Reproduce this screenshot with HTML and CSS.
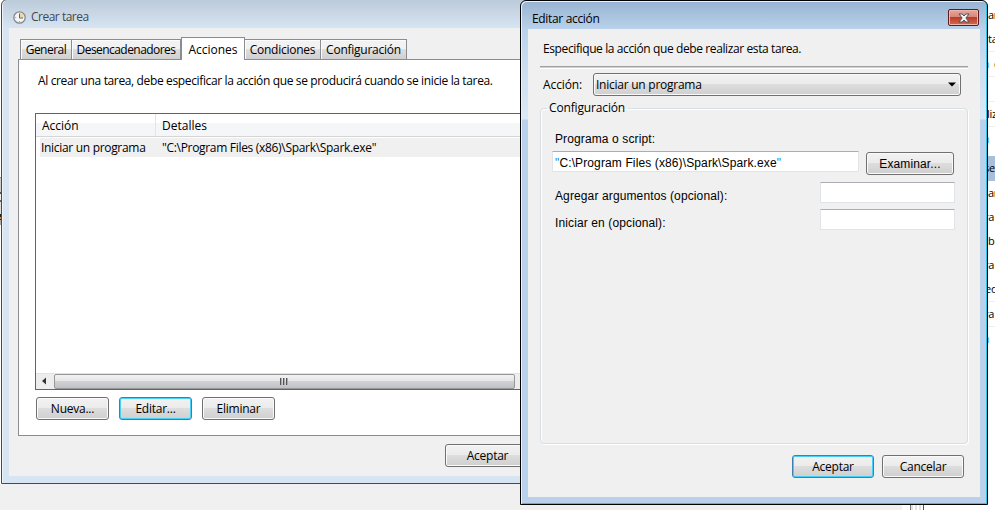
FILE: index.html
```html
<!DOCTYPE html>
<html lang="es">
<head>
<meta charset="utf-8">
<title>Crear tarea</title>
<link rel="stylesheet" href="styles.css">
</head>
<body>
<div class="desktop">
  <div class="back-left"></div>
  <div class="back-edge"></div>
  <div class="back-bar"><span class="bar-a"></span><span class="bar-b"></span></div>
  <ul class="back-list">
    <li>ar</li><li class="sep">ta</li><li class="sep nc"><span class="link">n</span> c</li><li class="sep"></li><li class="sep liz">liz</li><li class="link gap">n</li><li class="sel">se</li><li>ar</li><li class="cut">ra</li><li>bi</li><li class="cut">ra</li><li class="sep ed">ed</li><li class="sep cut">ra</li><li class="link">n</li>
  </ul>

  <section class="win task">
    <header class="title">
      <svg class="clock" width="13" height="13" viewBox="0 0 13 13"><circle cx="6.5" cy="6.5" r="5.7" fill="#f4f5f6" stroke="#85898e" stroke-width="1.3"/><path d="M6.5 6.5V2A4.5 4.5 0 0 1 11 6.5Z" fill="#f0d79a"/><path d="M6.5 2.5V7H10" fill="none" stroke="#5d646c"/><path d="M2.2 6.5h1M6.5 10v1" stroke="#999"/></svg>
      <span class="t-title">Crear tarea</span>
    </header>
    <div class="client">
      <nav class="tabs">
        <div class="tab w-general"><span>General</span></div>
        <div class="tab w-des"><span>Desencadenadores</span></div>
        <div class="tab active"><span>Acciones</span></div>
        <div class="tab w-con"><span>Condiciones</span></div>
        <div class="tab w-cfg"><span>Configuración</span></div>
      </nav>
      <div class="page">
        <p class="intro"><span class="t-intro">Al crear una tarea, debe especificar la acción que se producirá cuando se inicie la tarea.</span></p>
        <div class="list">
          <div class="lhead"><span class="c1">Acción</span><span class="c2">Detalles</span></div>
          <div class="lrow"><span class="c1 t-ini">Iniciar un programa</span><span class="c2 t-path">"C:\Program Files (x86)\Spark\Spark.exe"</span></div>
          <div class="scroll">
            <svg class="arrow" width="18" height="15" viewBox="0 0 18 15"><path d="M10 3.5V10.5L6 7Z" fill="#333"/></svg>
            <div class="thumb"><i></i><i></i><i></i></div>
          </div>
        </div>
        <div class="btns">
          <button class="btn">Nueva...</button>
          <button class="btn focus">Editar...</button>
          <button class="btn">Eliminar</button>
        </div>
      </div>
      <div class="foot"><button class="btn">Aceptar</button></div>
    </div>
  </section>

  <section class="win edit">
    <header class="title">
      <span class="t-edit">Editar acción</span>
      <button class="close" aria-label="Cerrar"><svg width="12" height="10" viewBox="0 0 12 10"><path d="M1 1h3.2L6 3 7.800 1H11L7.900 5 11 9H7.800L6 7 4.200 9H1L4.100 5Z" fill="#f5f5f5" stroke="#4b5260"/></svg></button>
    </header>
    <div class="client">
      <p class="spec"><span class="t-spec">Especifique la acción que debe realizar esta tarea.</span></p>
      <hr>
      <div class="action"><span class="t-acc">Acción:</span>
        <div class="combo"><span class="t-combo">Iniciar un programa</span><svg width="8" height="5" viewBox="0 0 8 5"><path d="M0 .5H8L4 4.500Z" fill="#000"/></svg></div>
      </div>
      <fieldset class="group">
        <legend><span class="t-cfg">Configuración</span></legend>
        <label class="prog">Programa o script:</label>
        <div class="prow"><div class="input big"><span><b>"</b>C:\Program Files (x86)\Spark\Spark.exe<b>"</b></span></div><button class="btn exam">Examinar...</button></div>
        <div class="frow"><span>Agregar argumentos (opcional):</span><div class="input"></div></div>
        <div class="frow"><span>Iniciar en (opcional):</span><div class="input"></div></div>
      </fieldset>
      <div class="foot"><button class="btn focus">Aceptar</button><button class="btn">Cancelar</button></div>
    </div>
  </section>
</div>
</body>
</html>
```

FILE: styles.css
```css
* { box-sizing: border-box; }
body { margin: 0; font: 12px/16px "Open Sans", "Noto Sans", sans-serif; letter-spacing: -.25px; color: #000; overflow: hidden; }
p, ul, fieldset, legend, hr { margin: 0; padding: 0; }
button { font: inherit; color: inherit; letter-spacing: inherit; padding: 0; }
span { white-space: nowrap; }
.desktop { position: relative; width: 995px; height: 510px; overflow: hidden; background: #fff; }
.back-left { position: absolute; left: 0; top: 484px; width: 902px; height: 26px; background: #f0f0f0; }
.back-edge { position: absolute; left: 0; top: 177px; width: 1px; height: 48px; background: linear-gradient(#999 0 1px, #ccc 1px 15px, #555 15px 17px, #eee 17px 23px, #666 23px 25px, #ddd 25px 37px, #222 37px 40px, #d98b28 40px 42px, #222 42px 43px, #aaa 43px); }
.back-bar { position: absolute; left: 902px; top: 505px; width: 22px; height: 5px; display: flex; }
.bar-a { width: 9px; background: #fff; border-right: 1px solid #777; }
.bar-b { flex: 1; border-right: 1px solid #555; background: repeating-linear-gradient(90deg, #e2e2e2 0 2px, #fff 2px 4px); }
.back-list { position: absolute; left: 975px; top: 3px; width: 20px; list-style: none; font-size: 11px; }
.back-list li { height: 24px; line-height: 24px; padding-left: 13px; white-space: nowrap; }
.back-list .sep { height: 25px; border-bottom: 1px solid #eee; }
.back-list .sel { height: 25px; padding-left: 9px; background: #a8bedd; }
.back-list .cut { padding-left: 9px; }
.back-list .ed { padding-left: 10px; }
.back-list .nc { padding-left: 8px; word-spacing: 2px; }
.back-list .liz { padding-left: 12px; }
.back-list .link { color: #39b5ef; padding-left: 8px; }
.back-list .nc .link { padding: 0; }
.back-list .gap { height: 29px; }

.win { position: absolute; display: flex; flex-direction: column; }
.win .client { background: #f0f0f0; flex: 1; display: flex; flex-direction: column; min-height: 0; }
.title { display: flex; align-items: center; flex: none; }
.task { left: 1px; top: -1px; width: 560px; height: 485px; padding: 0 7px 7px 7px; border: 1px solid #454a50; border-radius: 6px 6px 0 0; background: linear-gradient(#bccbda, #d7e4f2 28px); box-shadow: inset 1px 0 #eef4fa; }
.task .title { height: 28px; padding: 6px 0 0 4px; gap: 5px; color: #44484d; }
.t-title { letter-spacing: -.5px; }
.tabs { display: flex; align-items: flex-end; height: 32px; padding-left: 11px; position: relative; z-index: 1; flex: none; }
.tab { height: 21px; border: 1px solid #898c95; border-left-width: 0; background: linear-gradient(#f2f2f2 0 45%, #dedede 50%, #d0d0d0); box-shadow: inset 1px 1px #fcfcfc; display: flex; justify-content: center; align-items: center; padding-top: 1px; }
.w-general { width: 52px; border-left-width: 1px; letter-spacing: -.5px; }
.w-des { width: 109px; letter-spacing: -.55px; }
.tab.active { width: 64px; height: 23px; border-left-width: 1px; border-bottom: 0; background: #fff; letter-spacing: 0; }
.w-con { width: 76px; }
.w-cfg { width: 86px; }
.page { height: 377px; margin: -1px 0 0 9px; border: 1px solid #898c95; background: #fff; flex: none; padding-left: 16px; }
.intro { height: 53px; padding: 13px 0 0 3px; }
.t-intro { letter-spacing: -.36px; }
.list { height: 277px; border: 1px solid #646464; display: flex; flex-direction: column; }
.lhead, .lrow { display: flex; align-items: center; }
.lhead { height: 23px; background: linear-gradient(#fff 0 9px, #f5f6f8 9px); border-bottom: 1px solid #d5d5d5; letter-spacing: 0; }
.lhead .c1 { width: 120px; height: 22px; line-height: 24px; padding-left: 6px; border-right: 1px solid #e2e5ea; }
.lhead .c2 { padding: 2px 0 0 6px; }
.lrow { height: 19px; margin: 1px 0 0 4px; background: #f0f0f0; }
.lrow .c1 { width: 116px; padding-left: 1px; }
.lrow .c2 { padding-left: 6px; }
.t-ini, .t-path { letter-spacing: -.31px; }
.t-combo { letter-spacing: -.25px; }
.scroll { margin-top: auto; height: 16px; display: flex; background: #ededed; border-top: 1px solid #e3e3e3; }
.thumb { width: 461px; height: 15px; border: 1px solid #979797; border-radius: 2px; background: linear-gradient(#f3f3f3, #e4e5e7 45%, #d0d1d4 50%, #bfc1c5); display: flex; justify-content: center; align-items: center; gap: 1px; padding-right: 2px; }
.thumb i { width: 2px; height: 7px; background: linear-gradient(90deg, #555 50%, #aaa 50%); }
.btns { display: flex; gap: 10px; padding: 7px 0 0 1px; }
.btn { flex: none; width: 73px; height: 23px; line-height: 21px; border: 1px solid #707070; border-radius: 3px; background: linear-gradient(#f2f2f2, #ebebeb 48%, #dddddd 50%, #cfcfcf); box-shadow: inset 0 0 0 1px #fafafa; }
.btn.focus { border-color: #3c7fb1; box-shadow: inset 0 0 0 1px #46d0f6; }
.task .foot { padding: 8px 0 0 436px; }
.task .foot .btn { width: 85px; }

.edit { left: 520px; top: 0; width: 468px; height: 505px; border: 1px solid #000; border-radius: 6px 6px 0 0; padding: 0 7px 7px 7px; background: linear-gradient(#98b4d2, #b9d1ea 28px, #c9dcef 60px, #dce8f5 118px, #b9d1ea 119px); box-shadow: inset 1px 1px #eaf3fb, inset -1px -1px #2fc5e4; }
.edit .title { height: 28px; justify-content: space-between; padding: 7px 1px 0 4px; }
.t-edit { letter-spacing: -.33px; }
.close { width: 31px; height: 17px; margin-top: -8px; position: relative; top: 3px; border: 1px solid #5c1d22; border-radius: 2px; background: linear-gradient(#e8a69b, #d98578 48%, #bd3d26 50%, #cf6c55); box-shadow: inset 0 0 0 1px #eeb6ac; display: flex; align-items: center; justify-content: center; }
.spec { height: 37px; padding: 12px 0 0 15px; }
.t-spec { letter-spacing: -.39px; }
.t-acc { letter-spacing: -.1px; }
.edit hr { flex: none; border: 0; height: 3px; margin: 0 12px; background: linear-gradient(#a0a0a0 0 1px, #d0d0d0 1px 2px, #fff 2px); }
.action { display: flex; align-items: center; height: 23px; margin: 4px 19px 0 15px; flex: none; }
.combo { width: 368px; height: 23px; margin-left: auto; border: 1px solid #707070; border-radius: 3px; background: linear-gradient(#f2f2f2, #ebebeb 48%, #dddddd 50%, #cfcfcf); box-shadow: inset 0 0 0 1px #fafafa; display: flex; align-items: center; justify-content: space-between; padding: 0 4px 0 2px; }
.group { height: 344px; margin: 4px 12px 0; border: 1px solid #d5dfe5; border-radius: 4px; box-shadow: inset 1px 1px #fff, 1px 1px #fff; flex: none; min-width: 0; }
.group legend { margin-left: 6px; padding: 0 3px 0 2px; height: 16px; }
.t-cfg { letter-spacing: -.15px; }
.prog { display: block; margin: 15px 0 0 14px; }
.prow { display: flex; margin: 4px 0 0 11px; gap: 7px; }
.input { width: 135px; height: 21px; border: 1px solid #e0e4e9; border-top-color: #abadb3; border-radius: 1px; background: #fff; }
.big { width: 307px; padding: 3px 0 0 2px; }
.big b { font-weight: 400; color: #1680d8; }
.exam { width: 88px; height: 23px; margin-top: 1px; line-height: 23px; }
.frow { display: flex; justify-content: space-between; margin: 6px 12px 0 14px; height: 21px; line-height: 28px; }
.prow + .frow { margin-top: 7px; }
.prog, .big, .exam, .frow { font-family: "Liberation Sans", Arial, sans-serif; letter-spacing: .12px; }
.edit .foot { display: flex; gap: 8px; justify-content: flex-end; margin: 4px 16px 0; padding-top: 7px; }
.edit .foot .btn { width: 82px; }
```
